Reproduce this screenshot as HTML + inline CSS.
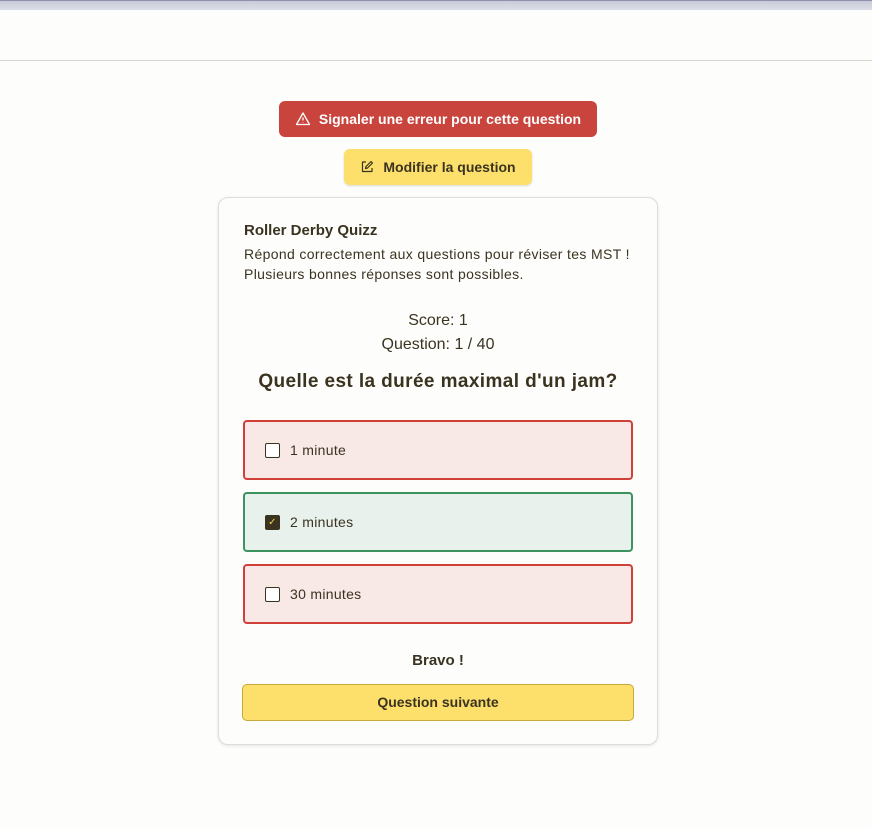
<!DOCTYPE html>
<html><head><meta charset="utf-8"><style>
*{box-sizing:border-box;margin:0;padding:0}
body{width:872px;height:828px;background:#fdfdfb;font-family:"Liberation Sans",sans-serif;color:#3a3320;position:relative;overflow:hidden}
.top{position:absolute;left:0;top:0;width:872px;height:10px;background:linear-gradient(#c8cad8,#dcdfe8);border-top:1px solid #8e90ad}
.hdr{position:absolute;left:0;top:60px;width:872px;height:1px;background:#d4d4d0}
.btn{position:absolute;border-radius:6px;display:flex;align-items:center;justify-content:center;font-size:14px;font-weight:bold}
.red{left:279px;top:101px;width:318px;height:36px;background:#c9443c;color:#fff}
.yel{left:344px;top:149px;width:188px;height:36px;background:#fde06c;color:#3a3320;box-shadow:0 1px 2px rgba(0,0,0,.15)}
.card{position:absolute;left:218px;top:197px;width:440px;height:548px;border:1px solid #ddd;border-radius:10px;background:#fdfdfb;box-shadow:0 1px 3px rgba(0,0,0,.1)}
.t{position:absolute;left:25px;top:24px;font-size:15px;font-weight:bold}
.d{position:absolute;left:25px;top:46px;font-size:14px;line-height:20px;letter-spacing:0.35px}
.c{position:absolute;left:0;width:438px;text-align:center}
.opt{position:absolute;left:24px;width:390px;height:60px;border:2px solid #cf4038;background:#f8e8e6;border-radius:4px;display:flex;align-items:center;padding-left:20px;font-size:14px;letter-spacing:0.3px}
.opt.g{border-color:#3c9360;background:#e8f1eb}
.cb{width:15px;height:15px;border:1.5px solid #3a3320;border-radius:2px;margin-right:10px;background:#fff}
.cb.k{background:#3a3320;color:#f5d44a;font-size:10px;text-align:center;line-height:13px}
.nx{position:absolute;left:23px;top:486px;width:392px;height:37px;background:#fde06c;border:1px solid #c8a838;border-radius:5px;text-align:center;line-height:35px;font-size:14px;font-weight:bold}
</style></head><body>
<div class="top"></div><div class="hdr"></div>
<div class="btn red"><svg width="16" height="16" viewBox="0 0 16 16" style="margin-right:8px"><path d="M8 2L14.5 13.5H1.5Z M8 6.5V9.5 M8 11.3V11.6" fill="none" stroke="#fff" stroke-width="1.3" stroke-linejoin="round"/></svg>Signaler une erreur pour cette question</div>
<div class="btn yel"><svg width="14" height="14" viewBox="0 0 14 14" style="margin-right:9px"><path d="M6 2H2.5V11.5H12V8 M5.5 8.5L6 6.5L11 1.5L12.5 3L7.5 8Z" fill="none" stroke="#3a3320" stroke-width="1.2" stroke-linejoin="round"/></svg>Modifier la question</div>
<div class="card">
<div class="t">Roller Derby Quizz</div>
<div class="d">Répond correctement aux questions pour réviser tes MST !<br>Plusieurs bonnes réponses sont possibles.</div>
<div class="c" style="top:111px;font-size:16px;line-height:24px">Score: 1<br>Question: 1 / 40</div>
<div class="c" style="top:173px;font-size:19px;font-weight:bold;letter-spacing:0.4px">Quelle est la durée maximal d'un jam?</div>
<div class="opt" style="top:222px"><div class="cb"></div>1 minute</div>
<div class="opt g" style="top:294px"><div class="cb k">✓</div>2 minutes</div>
<div class="opt" style="top:366px"><div class="cb"></div>30 minutes</div>
<div class="c" style="top:454px;font-size:15px;font-weight:bold">Bravo !</div>
<div class="nx">Question suivante</div>
</div>
</body></html>
